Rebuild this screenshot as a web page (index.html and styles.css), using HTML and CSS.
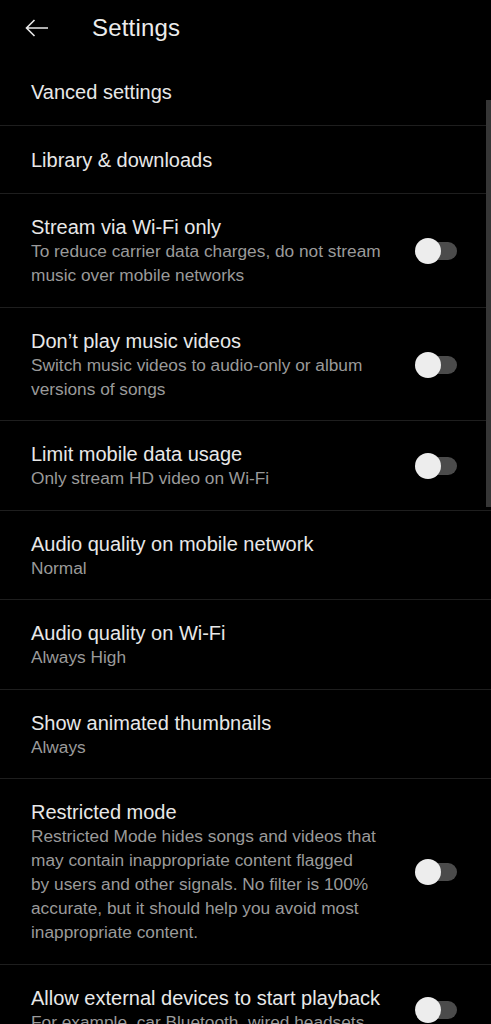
FILE: index.html
```html
<!DOCTYPE html>
<html>
<head>
<meta charset="utf-8">
<link rel="stylesheet" href="styles.css">
</head>
<body>
<div class="screen">
  <header class="topbar">
    <svg class="back" width="24" height="18" viewBox="0 0 24 18"><path d="M23 9H1.5M9.5 1L1.5 9l8 8" fill="none" stroke="#e8e8e8" stroke-width="1.6"/></svg>
    <h1 class="title">Settings</h1>
  </header>
  <div class="list">
    <div class="row single"><div class="text"><div class="label">Vanced settings</div></div></div>
    <div class="row single"><div class="text"><div class="label">Library &amp; downloads</div></div></div>
    <div class="row"><div class="text"><div class="label">Stream via Wi-Fi only</div><div class="sub">To reduce carrier data charges, do not stream music over mobile networks</div></div><span class="toggle"></span></div>
    <div class="row"><div class="text"><div class="label">Don’t play music videos</div><div class="sub">Switch music videos to audio-only or album versions of songs</div></div><span class="toggle"></span></div>
    <div class="row"><div class="text"><div class="label">Limit mobile data usage</div><div class="sub">Only stream HD video on Wi-Fi</div></div><span class="toggle"></span></div>
    <div class="row"><div class="text"><div class="label">Audio quality on mobile network</div><div class="sub">Normal</div></div></div>
    <div class="row"><div class="text"><div class="label">Audio quality on Wi-Fi</div><div class="sub">Always High</div></div></div>
    <div class="row"><div class="text"><div class="label">Show animated thumbnails</div><div class="sub">Always</div></div></div>
    <div class="row"><div class="text"><div class="label">Restricted mode</div><div class="sub">Restricted Mode hides songs and videos that may contain inappropriate content flagged<br>by users and other signals. No filter is 100% accurate, but it should help you avoid most inappropriate content.</div></div><span class="toggle"></span></div>
    <div class="row last"><div class="text"><div class="label">Allow external devices to start playback</div><div class="sub">For example, car Bluetooth, wired headsets, or other devices</div></div><span class="toggle top"></span></div>
  </div>
  <div class="scrollbar"></div>
</div>
</body>
</html>
```
FILE: styles.css
```css
html, body {
  margin: 0;
  padding: 0;
  background: #000;
}
body {
  font-family: "Liberation Sans", Arial, sans-serif;
  color: #e8e8e8;
}
.screen {
  position: relative;
  width: 491px;
  height: 1024px;
  overflow: hidden;
  background: #000;
}
.topbar {
  height: 58px;
  display: flex;
  align-items: center;
  padding-left: 25px;
  box-sizing: border-box;
  padding-bottom: 2px;
}
.back {
  display: block;
  flex: none;
}
.title {
  margin: 0 0 0 43px;
  font-size: 24px;
  font-weight: normal;
  color: #ececec;
  letter-spacing: 0.2px;
}
.list {
  display: flex;
  flex-direction: column;
}
.row {
  display: flex;
  align-items: center;
  padding: 21px 0 19.5px 31px;
  border-bottom: 1px solid #1e1e1e;
}
.row.single {
  padding: 21.5px 0 21.5px 31px;
}
.row.last {
  align-items: flex-start;
}
.text {
  flex: 1;
  min-width: 0;
}
.label {
  font-size: 20px;
  line-height: 24px;
  color: #e8e8e8;
}
.sub {
  font-size: 17.3px;
  line-height: 24px;
  color: #9a9a9a;
  width: 354px;
}
.toggle {
  flex: none;
  position: relative;
  width: 39px;
  height: 18px;
  border-radius: 9px;
  background: #4b4b4b;
  margin: 0 34px 0 24px;
}
.toggle::before {
  content: "";
  position: absolute;
  left: -3px;
  top: -4px;
  width: 26px;
  height: 26px;
  border-radius: 50%;
  background: #ededed;
}
.toggle.top {
  margin-top: 15px;
}
.scrollbar {
  position: absolute;
  right: 0;
  top: 100px;
  width: 5px;
  height: 407px;
  background: #363636;
}
```
